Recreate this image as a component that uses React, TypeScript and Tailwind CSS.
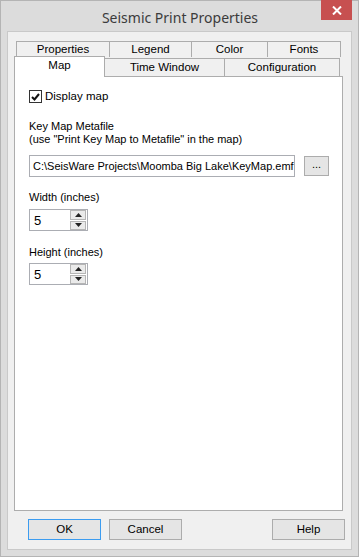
import React from "react";

const ui = { fontFamily: '"Liberation Sans", Arial, sans-serif' };
const tabFont = { fontFamily: '"Liberation Sans", Arial, sans-serif' };

function Tab({ label, w, top }: { label: string; w: string; top?: boolean }) {
  return (
    <div
      className={`${w} ${top ? "h-[16px]" : "h-[19px]"} flex items-center justify-center border border-[#acacac] border-b-0 -ml-px first:ml-0 bg-[#f0f0f0] text-[11.5px] text-black leading-none`}
      style={tabFont}
    >
      {label}
    </div>
  );
}

function Spinner({ value }: { value: string }) {
  return (
    <div className="w-[59px] h-[22px] border border-[#abadb3] bg-white flex items-center">
      <span className="flex-1 pl-[4px] text-[13px] text-black leading-none">{value}</span>
      <div className="w-[16px] h-[20px] mr-px flex flex-col gap-px">
        <div className="flex-1 bg-[#eaeaea] border border-[#b5b5b5] flex items-center justify-center">
          <svg width="7" height="4" viewBox="0 0 7 4"><path d="M0 4 L3.5 0 L7 4 Z" fill="#222" /></svg>
        </div>
        <div className="flex-1 bg-[#eaeaea] border border-[#b5b5b5] flex items-center justify-center">
          <svg width="7" height="4" viewBox="0 0 7 4"><path d="M0 0 L3.5 4 L7 0 Z" fill="#222" /></svg>
        </div>
      </div>
    </div>
  );
}

function Btn({ label, focus }: { label: string; focus?: boolean }) {
  return (
    <button
      className={`w-[73px] h-[21px] border ${focus ? "border-[#3c9cf0]" : "border-[#acacac]"} bg-[#e5e5e5] text-[11.5px] text-black leading-none`}
      style={ui}
    >
      {label}
    </button>
  );
}

export default function App() {
  return (
    <div className="w-[359px] h-[557px] bg-[#dcdcdc] border border-[#b4b4b4] flex flex-col">
      <div className="h-[30px] flex items-start">
        <div className="w-[38px]" />
        <div
          className="flex-1 text-center pt-[6px] text-[14px] text-[#3b3b3b]"
          style={{ fontFamily: '"Noto Sans", "Open Sans", sans-serif' }}
        >
          Seismic Print Properties
        </div>
        <div className="w-[31px] h-[20px] -mt-px bg-[#c75050] flex items-center justify-center mr-[6px]">
          <svg width="10" height="9" viewBox="0 0 10 9">
            <path d="M1 0.5 L9 8.5 M9 0.5 L1 8.5" stroke="#fff" strokeWidth="2" />
          </svg>
        </div>
      </div>

      <div className="mx-[6px] flex-1 mb-[6px] bg-[#f0f0f0] border border-[#c9c9c9] px-[6px] pt-[9px] flex flex-col" style={ui}>
        {/* tab rows */}
        <div className="flex ml-[2px]">
          <Tab label="Properties" w="w-[94px]" top />
          <Tab label="Legend" w="w-[83px]" top />
          <Tab label="Color" w="w-[77px]" top />
          <Tab label="Fonts" w="w-[74px]" top />
        </div>
        <div className="flex items-end h-[20px] -mb-px">
          <div
            className="w-[91px] h-[21px] -mt-px border border-[#acacac] border-b-0 bg-white flex items-start justify-center pt-[3px] text-[11.5px] text-black leading-none relative z-10"
            style={tabFont}
          >
            Map
          </div>
          <Tab label="Time Window" w="w-[121px]" />
          <Tab label="Configuration" w="w-[116px]" />
        </div>

        {/* panel */}
        <div className="w-[329px] h-[435px] bg-white border border-[#adadad] pl-[14px] pt-[13px] text-[11px] text-black">
          <label className="flex items-center gap-[3px] h-[13px]">
            <span className="w-[13px] h-[13px] border border-[#333] bg-white flex items-center justify-center">
              <svg width="9" height="8" viewBox="0 0 9 8">
                <path d="M1 4 L3.5 6.5 L8 1" stroke="#111" strokeWidth="2" fill="none" />
              </svg>
            </span>
            <span className="text-[11.5px] leading-none">Display map</span>
          </label>

          <div className="mt-[17px] leading-[13px]">
            <div>Key Map Metafile</div>
            <div>(use "Print Key Map to Metafile" in the map)</div>
          </div>

          <div className="mt-[9px] flex items-center">
            <div className="w-[266px] h-[22px] border border-[#abadb3] flex items-center px-[3px] text-[11px] whitespace-nowrap overflow-hidden">
              C:\SeisWare Projects\Moomba Big Lake\KeyMap.emf
            </div>
            <button className="ml-[9px] w-[25px] h-[20px] border border-[#acacac] bg-[#e5e5e5] text-[11px] leading-none pb-[4px]">...</button>
          </div>

          <div className="mt-[15px] leading-none">Width (inches)</div>
          <div className="mt-[6px]">
            <Spinner value="5" />
          </div>

          <div className="mt-[16px] leading-none">Height (inches)</div>
          <div className="mt-[5px]">
            <Spinner value="5" />
          </div>
        </div>

        <div className="flex mt-[8px] pl-[14px] gap-[8px]">
          <Btn label="OK" focus />
          <Btn label="Cancel" />
          <div className="flex-1" />
          <Btn label="Help" />
        </div>
      </div>
    </div>
  );
}
